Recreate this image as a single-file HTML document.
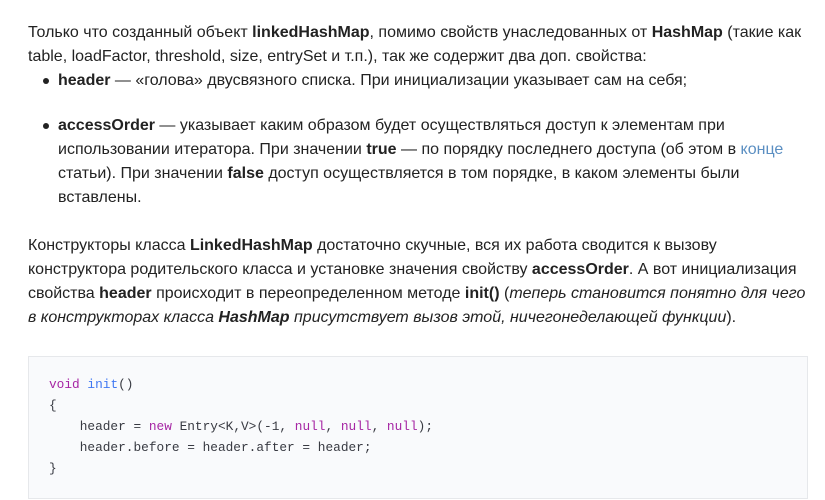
<!DOCTYPE html>
<html><head><meta charset="utf-8"><style>
body{margin:0;background:#fff;width:825px;height:500px;overflow:hidden;font-family:"Liberation Sans",Arial,sans-serif;font-size:16px;color:#222;}
.t{position:absolute;left:28px;white-space:nowrap;line-height:24px;}
.li{position:absolute;left:58px;white-space:nowrap;line-height:24px;}
.dot{position:absolute;left:43px;width:6px;height:6px;border-radius:50%;background:#222;}
b{font-weight:bold;}
a{color:#5b8fc2;text-decoration:none;}
.code{position:absolute;left:28px;top:356px;width:778px;height:141px;background:#f9fafc;border:1px solid #e6e8eb;}
pre{margin:0;position:absolute;left:20px;top:17px;font-family:"Liberation Mono",monospace;font-size:12.8px;line-height:21px;color:#383a42;}
.k{color:#a626a4}.f{color:#4078f2}
</style></head><body>
<div class="t" style="top:21px">Только что созданный объект <b>linkedHashMap</b>, помимо свойств унаследованных от <b>HashMap</b> (такие как<br>table, loadFactor, threshold, size, entrySet и т.п.), так же содержит два доп. свойства:</div>
<div class="dot" style="top:78px"></div>
<div class="li" style="top:69px"><b>header</b> — «голова» двусвязного списка. При инициализации указывает сам на себя;</div>
<div class="dot" style="top:123px"></div>
<div class="li" style="top:114px"><b>accessOrder</b> — указывает каким образом будет осуществляться доступ к элементам при<br>использовании итератора. При значении <b>true</b> — по порядку последнего доступа (об этом в <a>конце</a><br>статьи). При значении <b>false</b> доступ осуществляется в том порядке, в каком элементы были<br>вставлены.</div>
<div class="t" style="top:234px">Конструкторы класса <b>LinkedHashMap</b> достаточно скучные, вся их работа сводится к вызову<br>конструктора родительского класса и установке значения свойству <b>accessOrder</b>. А вот инициализация<br>свойства <b>header</b> происходит в переопределенном методе <b>init()</b> (<i>теперь становится понятно для чего<br>в конструкторах класса <b>HashMap</b> присутствует вызов этой, ничегонеделающей функции</i>).</div>
<div class="code"><pre><span class="k">void</span> <span class="f">init</span>()
{
    header = <span class="k">new</span> Entry&lt;K,V&gt;(-1, <span class="k">null</span>, <span class="k">null</span>, <span class="k">null</span>);
    header.before = header.after = header;
}</pre></div>
</body></html>
